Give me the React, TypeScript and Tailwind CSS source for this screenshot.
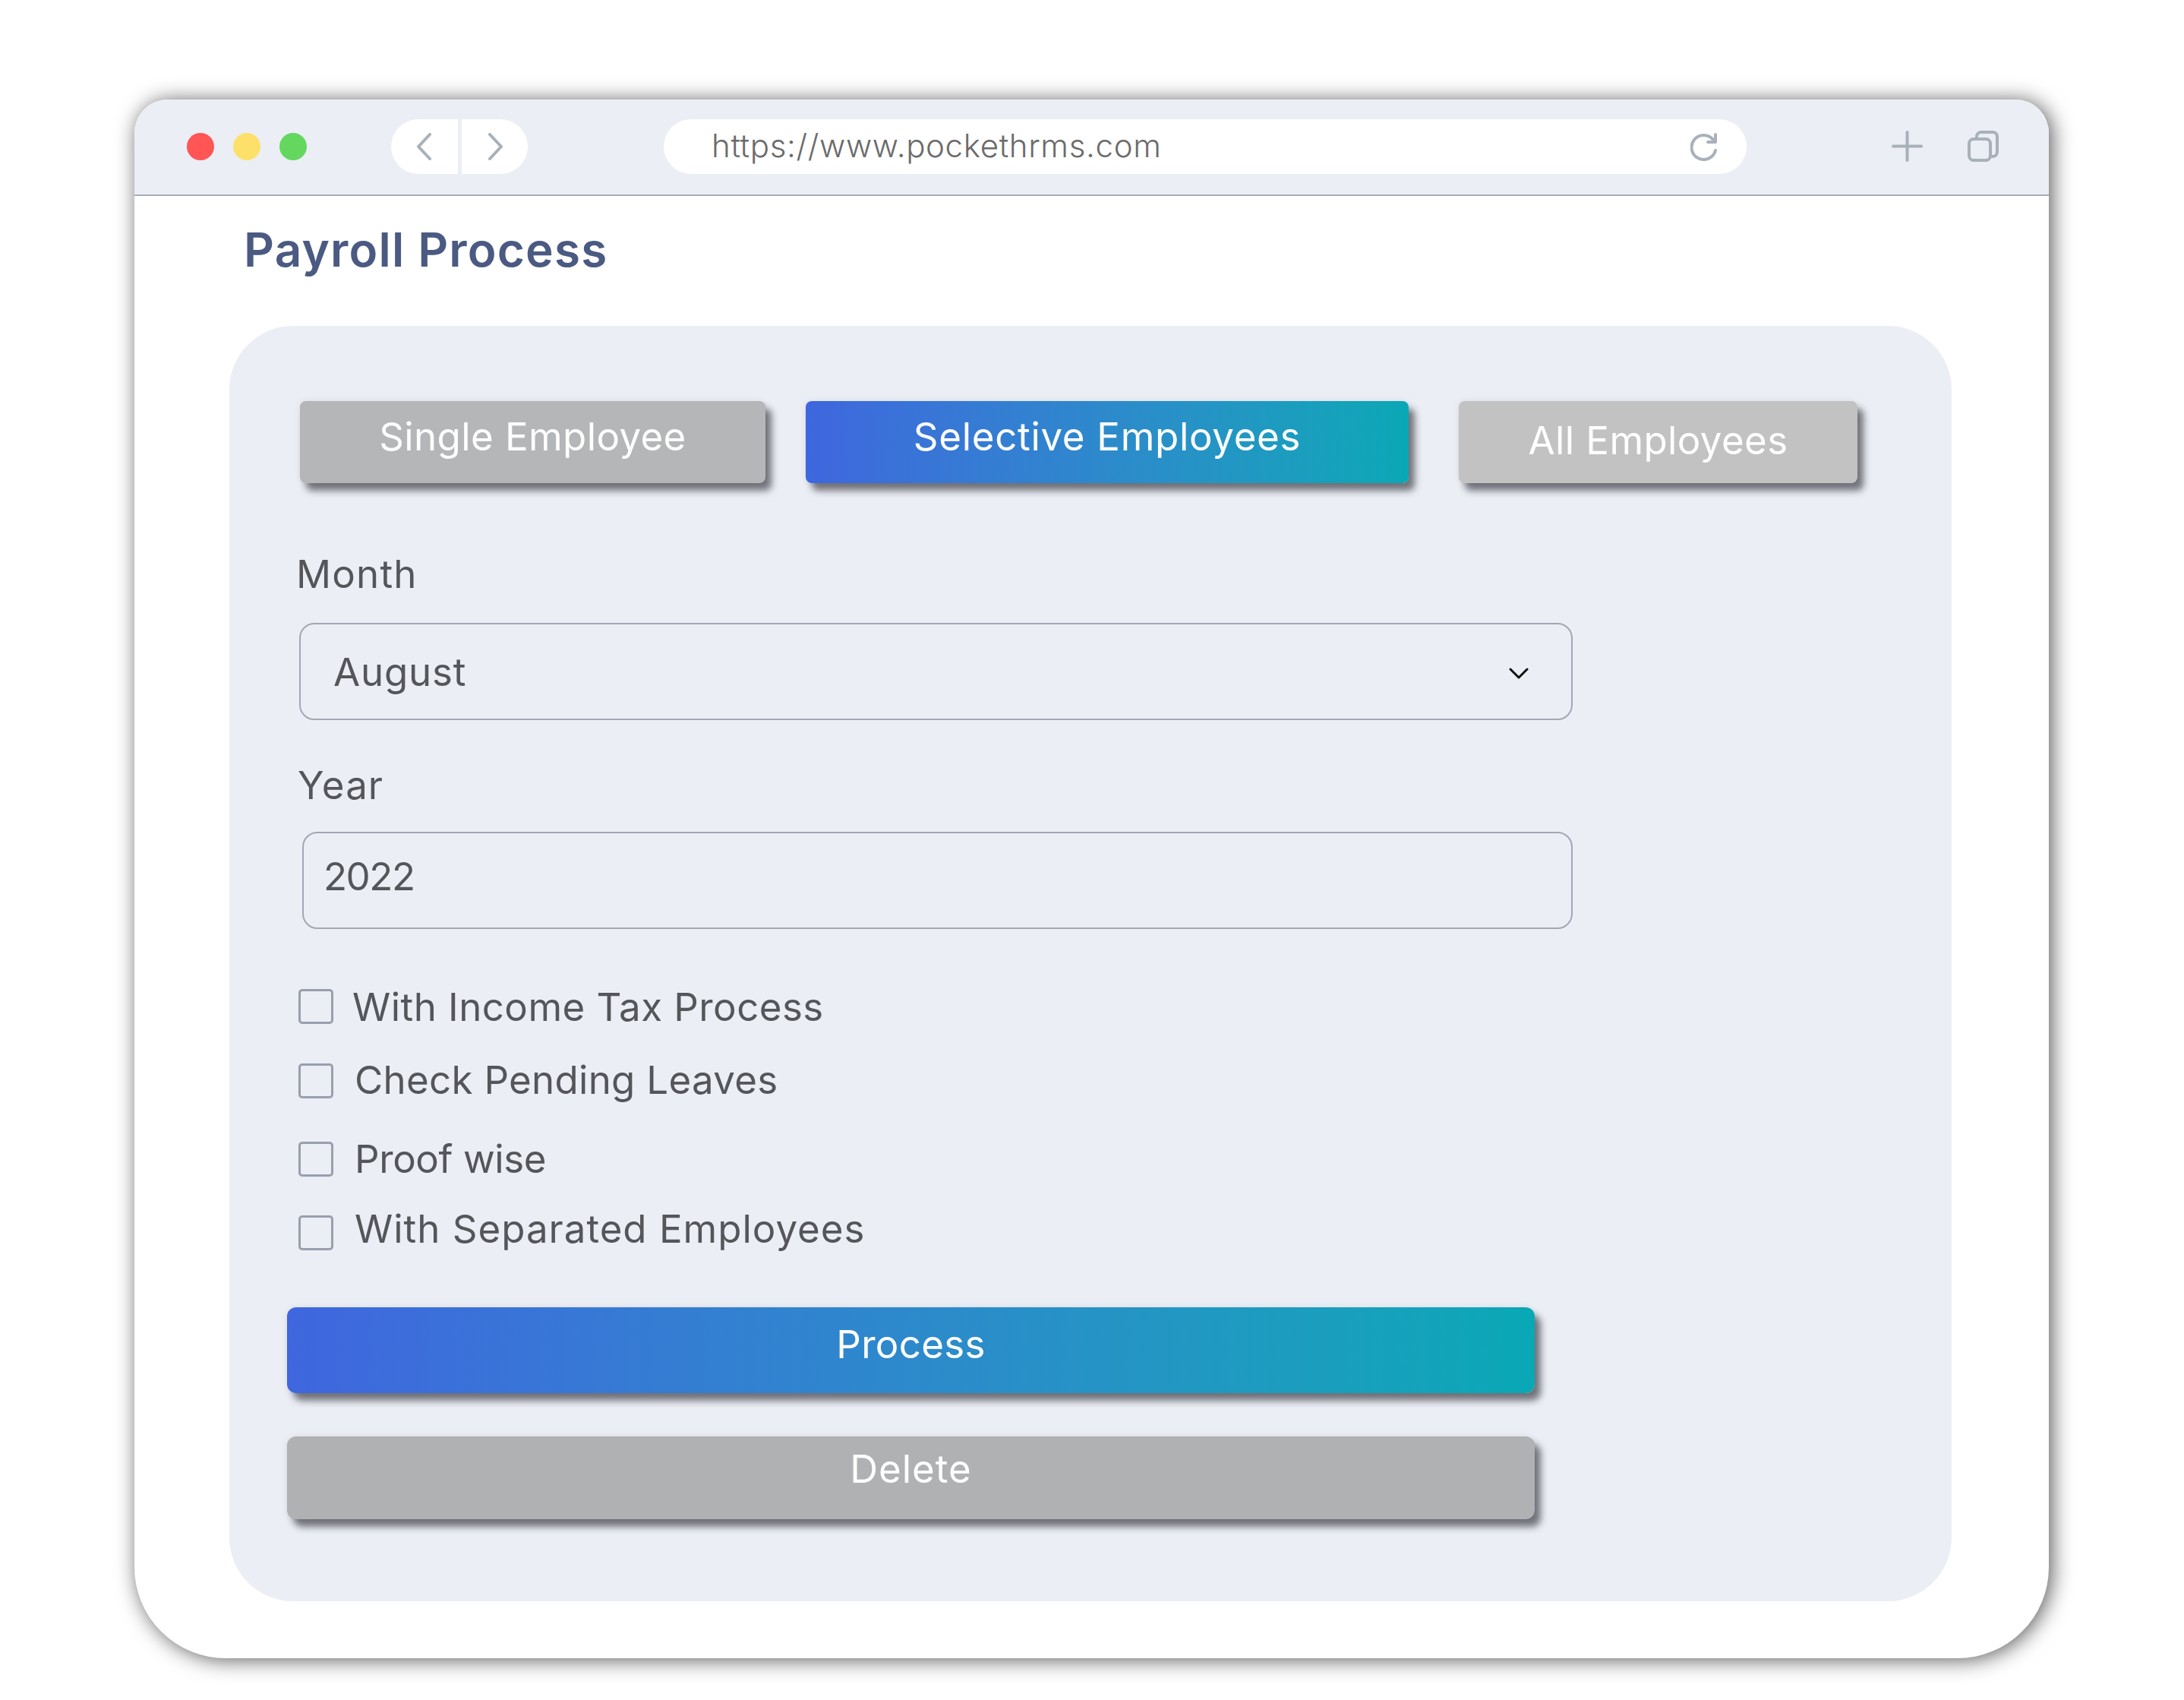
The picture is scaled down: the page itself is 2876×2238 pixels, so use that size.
import React from 'react';

const checks = [
  { label: 'With Income Tax Process', row: 'mt-[79px]', text: 'ml-[25px] tracking-[0.45px]' },
  { label: 'Check Pending Leaves', row: 'mt-[52px]', text: 'ml-[28px] pb-[3px] tracking-[0.3px]' },
  { label: 'Proof wise', row: 'mt-[57px]', text: 'ml-[28px] pb-[1px] tracking-[-0.4px]' },
  { label: 'With Separated Employees', row: 'mt-[51px]', text: 'ml-[28px] pb-[12px] tracking-[1px]' },
];

const shadow = 'shadow-[8px_10px_10px_rgba(50,50,60,0.65),0_0_10px_rgba(0,0,0,0.08)]';

function Toolbar() {
  return (
    <div className="flex h-[127px] shrink-0 items-center border-b-2 border-[#a9adb5] bg-[#ebeef5] pb-[2px]">
      {/* Traffic lights */}
      <div className="ml-[69px] flex gap-[25px]">
        <div className="h-[36px] w-[36px] rounded-full bg-[#ff5555]" />
        <div className="h-[36px] w-[36px] rounded-full bg-[#fde06a]" />
        <div className="h-[36px] w-[36px] rounded-full bg-[#63d75e]" />
      </div>

      {/* Back / forward */}
      <div className="ml-[111px] flex gap-[5px]">
        <div className="flex h-[72px] w-[88px] items-center rounded-l-[36px] bg-white pl-[33px]">
          <svg width="20" height="36" viewBox="0 0 20 36" fill="none" stroke="#a8b1b9" strokeWidth="4" strokeLinecap="round" strokeLinejoin="round">
            <path d="M18 2 L3 18 L18 34" />
          </svg>
        </div>
        <div className="flex h-[72px] w-[87px] items-center rounded-r-[36px] bg-white pl-[35px]">
          <svg width="20" height="36" viewBox="0 0 20 36" fill="none" stroke="#a8b1b9" strokeWidth="4" strokeLinecap="round" strokeLinejoin="round">
            <path d="M2 2 L17 18 L2 34" />
          </svg>
        </div>
      </div>

      {/* Address bar */}
      <div className="ml-[179px] flex h-[72px] w-[1426px] items-center justify-between rounded-full bg-white pl-[63px] pr-[38px]">
        <span className="pb-[2px] text-[42px] font-light leading-none tracking-[0.65px] text-[#6b6b6b]">https://www.pockethrms.com</span>
        <svg width="36" height="38" viewBox="0 0 36 38" fill="none" stroke="#a8b1b9" strokeWidth="4" strokeLinecap="round" strokeLinejoin="round">
          <path d="M30 10 A16 16 0 1 0 33 24" />
          <path d="M33 3 V13 H23" />
        </svg>
      </div>

      {/* Plus + tabs */}
      <svg className="ml-[191px]" width="41" height="41" viewBox="0 0 41 41" fill="none" stroke="#a8b1b9" strokeWidth="4" strokeLinecap="round">
        <path d="M20.5 2 V39 M2 20.5 H39" />
      </svg>
      <svg className="ml-[59px]" width="41" height="41" viewBox="0 0 41 41" fill="none" stroke="#a8b1b9" strokeWidth="4" strokeLinejoin="round">
        <rect x="2" y="11" width="28" height="28" rx="6" />
        <path d="M12 10 V8 a6 6 0 0 1 6 -6 h15 a6 6 0 0 1 6 6 v20 a6 6 0 0 1 -6 6 h-2" />
      </svg>
    </div>
  );
}

export default function App() {
  return (
    <div className="h-[2238px] w-[2876px] overflow-hidden bg-white pl-[177px] pt-[131px] font-['Inter',sans-serif]">
      <div className="flex h-[2052px] w-[2521px] flex-col overflow-hidden rounded-b-[120px] rounded-t-[44px] bg-white shadow-[4px_2px_28px_rgba(0,0,0,0.65)]">
        <Toolbar />

        <h1 className="ml-[144px] mt-[40px] text-[62px] font-semibold leading-none tracking-[1.2px] text-[#4a5a82]">Payroll Process</h1>

        {/* Panel */}
        <div className="ml-[125px] mt-[69px] h-[1679px] w-[2268px] rounded-[84px] bg-[#ebeef5] pl-[76px] pt-[99px]">
          {/* Mode tabs */}
          <div className="ml-[17px] flex">
            <button className={`flex h-[108px] w-[613px] items-center justify-center rounded-[8px] bg-[#b5b6b8] pb-[16px] text-[51px] leading-none tracking-[0.4px] text-white ${shadow}`}>Single Employee</button>
            <button className={`ml-[53px] flex h-[108px] w-[794px] items-center justify-center rounded-[8px] bg-gradient-to-r from-[#3f66de] to-[#08a8b6] pb-[16px] text-[51px] leading-none tracking-[0.7px] text-white ${shadow}`}>Selective Employees</button>
            <button className={`ml-[66px] flex h-[108px] w-[525px] items-center justify-center rounded-[8px] bg-[#c2c2c2] pb-[6px] text-[51px] leading-none tracking-[0.4px] text-white ${shadow}`}>All Employees</button>
          </div>

          {/* Month */}
          <div className="ml-[12px] mt-[94px] text-[51px] leading-none tracking-[1.2px] text-[#54565a]">Month</div>
          <div className="ml-[16px] mt-[39px] flex h-[128px] w-[1677px] items-center justify-between rounded-[20px] border-2 border-[#a3a7b3] pl-[43px] pr-[56px]">
            <span className="text-[51px] leading-none tracking-[0.8px] text-[#54565a]">August</span>
            <svg className="mt-[4px]" width="26" height="15" viewBox="0 0 26 15" fill="none" stroke="#111" strokeWidth="3" strokeLinecap="round" strokeLinejoin="round">
              <path d="M2 2 L13 13 L24 2" />
            </svg>
          </div>

          {/* Year */}
          <div className="ml-[14px] mt-[60px] text-[51px] leading-none tracking-[1.1px] text-[#54565a]">Year</div>
          <div className="ml-[20px] mt-[36px] flex h-[128px] w-[1673px] items-center rounded-[20px] border-2 border-[#a3a7b3] pb-[12px] pl-[26px]">
            <span className="text-[51px] leading-none tracking-[-1.5px] text-[#54565a]">2022</span>
          </div>

          {/* Options */}
          {checks.map((c) => (
            <label key={c.label} className={`ml-[15px] flex h-[46px] items-center ${c.row}`}>
              <input type="checkbox" className="h-[46px] w-[46px] appearance-none rounded-[5px] border-[3px] border-[#9a9fae]" />
              <span className={`text-[51px] leading-none text-[#54565a] ${c.text}`}>{c.label}</span>
            </label>
          ))}

          <button className={`mt-[75px] flex h-[113px] w-[1643px] items-center justify-center rounded-[12px] bg-gradient-to-r from-[#3f66de] to-[#08a8b6] pb-[16px] text-[51px] leading-none tracking-[0.3px] text-white ${shadow}`}>Process</button>
          <button className={`mt-[57px] flex h-[109px] w-[1643px] items-center justify-center rounded-[12px] bg-[#b0b1b3] pb-[24px] text-[51px] leading-none tracking-[1px] text-white ${shadow}`}>Delete</button>
        </div>
      </div>
    </div>
  );
}
